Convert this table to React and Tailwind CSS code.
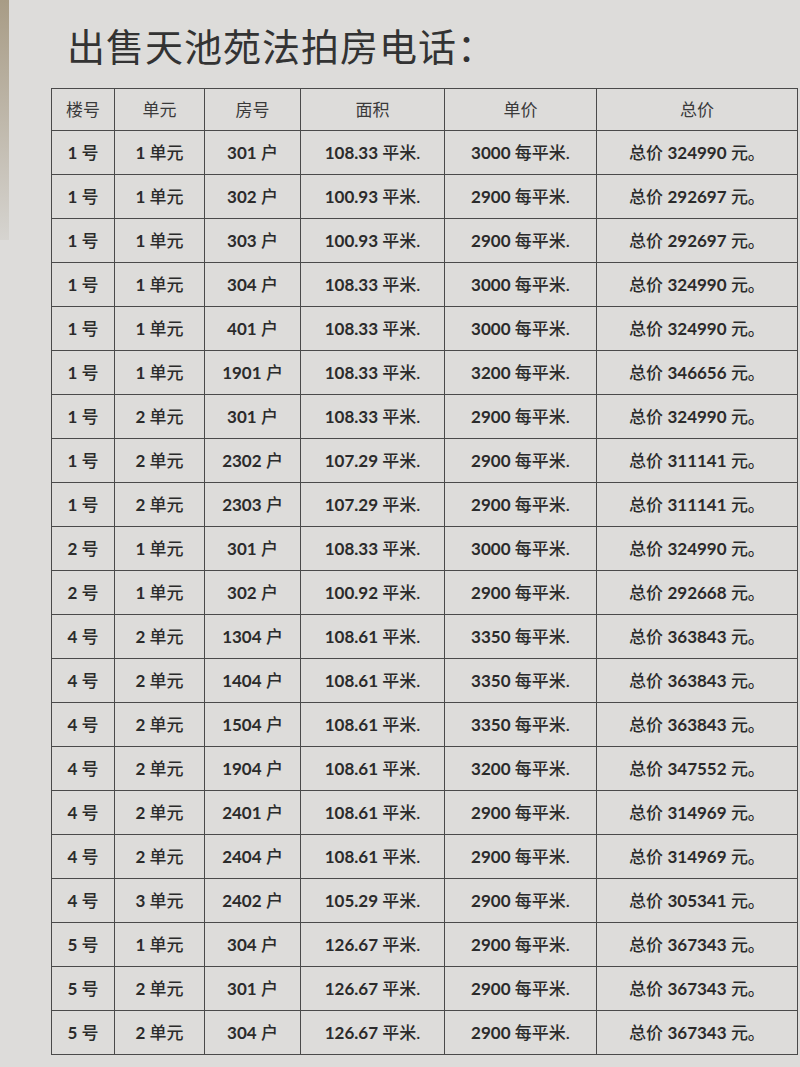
const rows = [
  ["1", "1", "301", "108.33", "3000", "324990"],
  ["1", "1", "302", "100.93", "2900", "292697"],
  ["1", "1", "303", "100.93", "2900", "292697"],
  ["1", "1", "304", "108.33", "3000", "324990"],
  ["1", "1", "401", "108.33", "3000", "324990"],
  ["1", "1", "1901", "108.33", "3200", "346656"],
  ["1", "2", "301", "108.33", "2900", "324990"],
  ["1", "2", "2302", "107.29", "2900", "311141"],
  ["1", "2", "2303", "107.29", "2900", "311141"],
  ["2", "1", "301", "108.33", "3000", "324990"],
  ["2", "1", "302", "100.92", "2900", "292668"],
  ["4", "2", "1304", "108.61", "3350", "363843"],
  ["4", "2", "1404", "108.61", "3350", "363843"],
  ["4", "2", "1504", "108.61", "3350", "363843"],
  ["4", "2", "1904", "108.61", "3200", "347552"],
  ["4", "2", "2401", "108.61", "2900", "314969"],
  ["4", "2", "2404", "108.61", "2900", "314969"],
  ["4", "3", "2402", "105.29", "2900", "305341"],
  ["5", "1", "304", "126.67", "2900", "367343"],
  ["5", "2", "301", "126.67", "2900", "367343"],
  ["5", "2", "304", "126.67", "2900", "367343"],
];

const headers = ["楼号", "单元", "房号", "面积", "单价", "总价"];

// number bold, chinese unit in regular weight like the print
function Cell({ pre, num, unit }) {
  return (
    <td className="border-[1.5px] border-[#4a4a4a] text-center text-[17px]">
      {pre && <span className="font-medium">{pre} </span>}
      <span className="font-bold">{num}</span>
      <span className="font-medium"> {unit}</span>
    </td>
  );
}

export default function App() {
  return (
    <div
      className="w-[800px] h-[1067px] overflow-hidden flex bg-[#dddcda] text-[#2b2b2b]"
      style={{ fontFamily: 'Lato, "Noto Sans CJK SC", sans-serif' }}
    >
      <div className="w-[9px] h-[240px] shrink-0 bg-gradient-to-b from-[#a89c86] to-[#d6d4d0]" />
      <div className="flex-1 flex flex-col">
        <h1 className="pl-[58px] pt-[21px] h-[88px] text-[38px] leading-[50px] font-normal tracking-[1px] text-[#333]">
          出售天池苑法拍房电话：
        </h1>
        <table className="ml-[42px] w-[746px] table-fixed border-collapse">
          <colgroup>
            <col className="w-[63px]" />
            <col className="w-[90px]" />
            <col className="w-[96px]" />
            <col className="w-[144px]" />
            <col className="w-[152px]" />
            <col className="w-[201px]" />
          </colgroup>
          <thead>
            <tr className="h-[42px]">
              {headers.map((h) => (
                <th
                  key={h}
                  className="border-[1.5px] border-[#4a4a4a] text-[17px] font-normal text-center text-[#3a3a3a]"
                >
                  {h}
                </th>
              ))}
            </tr>
          </thead>
          <tbody>
            {rows.map((r, i) => (
              <tr key={i} className="h-[44px]">
                <Cell num={r[0]} unit="号" />
                <Cell num={r[1]} unit="单元" />
                <Cell num={r[2]} unit="户" />
                <Cell num={r[3]} unit="平米." />
                <Cell num={r[4]} unit="每平米." />
                <Cell pre="总价" num={r[5]} unit="元。" />
              </tr>
            ))}
          </tbody>
        </table>
      </div>
    </div>
  );
}
